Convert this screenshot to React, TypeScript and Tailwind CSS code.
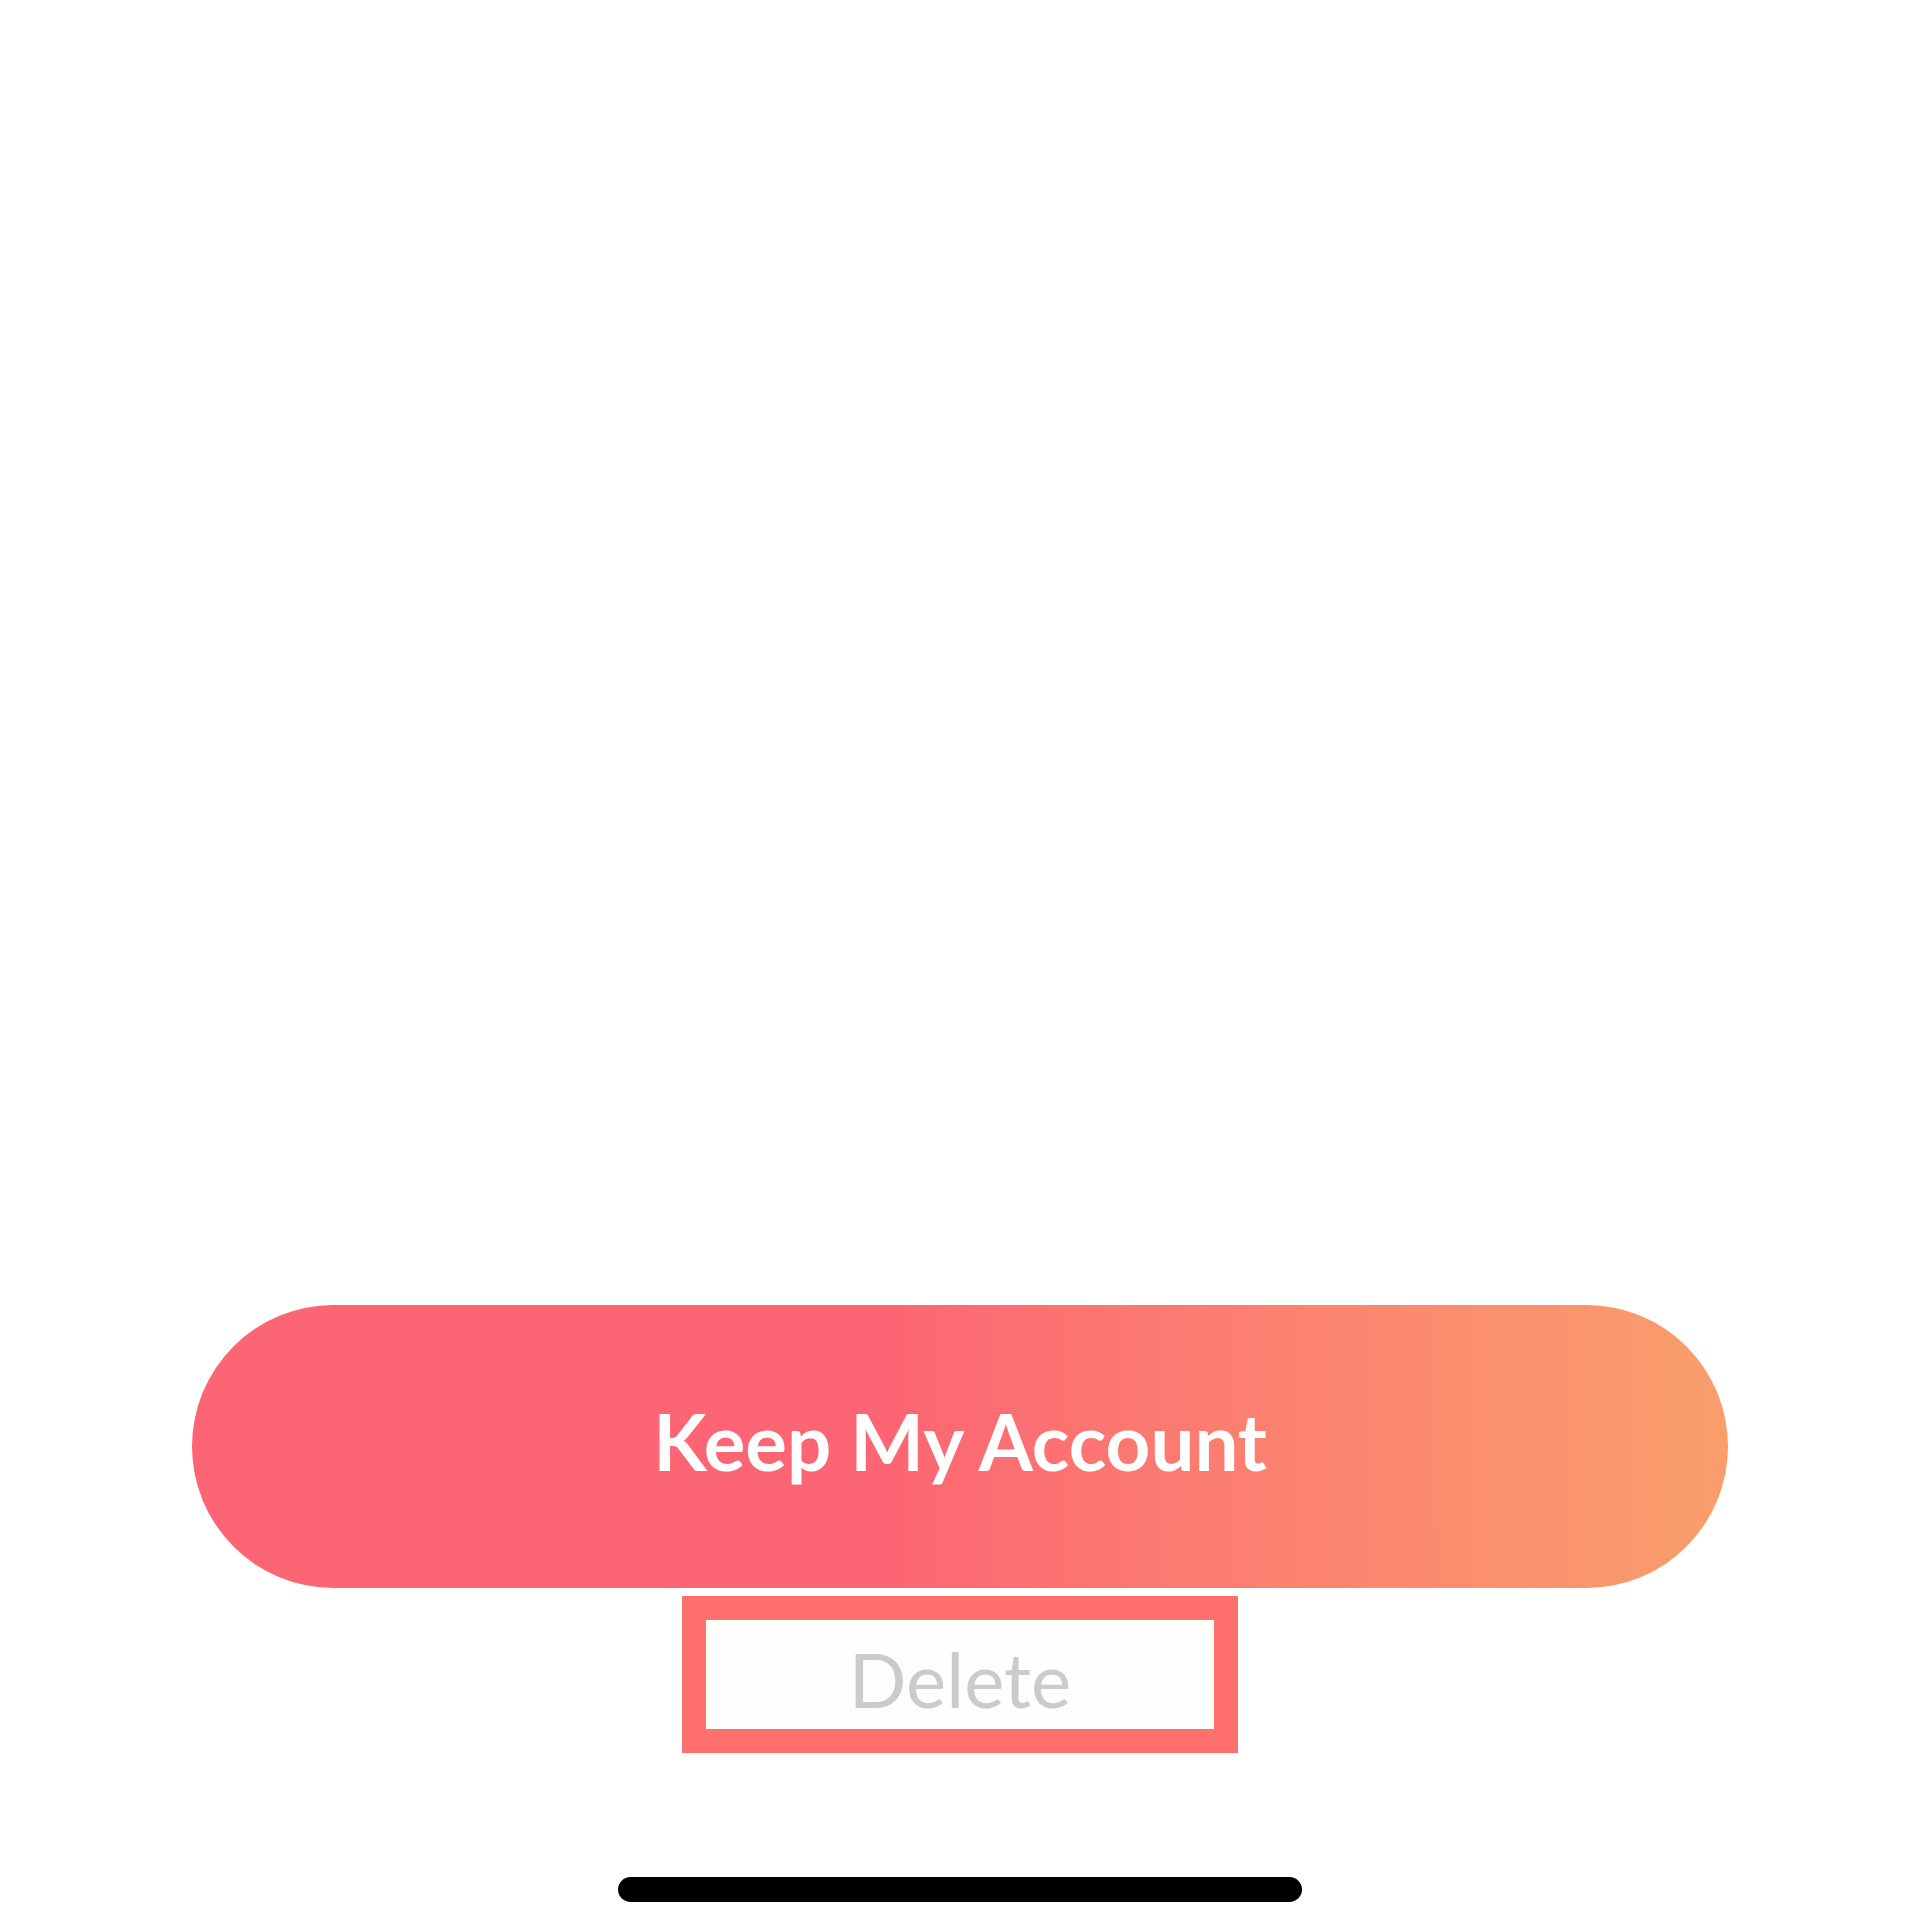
export default function App() {
  return (
    <div className="w-full h-[1920px] bg-white flex flex-col items-center font-['Lato','Noto_Sans',sans-serif]">
      {/* Empty content area */}
      <div className="flex-1" />

      {/* Primary action */}
      <button className="w-[1536px] h-[283px] shrink-0 rounded-full bg-linear-to-r from-[#fc6573] from-45% to-[#f99e6b] text-white text-[78px] font-bold leading-none flex items-center justify-center pb-[12px]">
        Keep My Account
      </button>

      {/* Secondary action, highlighted */}
      <button className="mt-[8px] w-[556px] h-[157px] shrink-0 border-[24px] border-[#ff6f6b] bg-[#fcfffc] text-[#cbcbcb] text-[76px] font-normal leading-none flex items-center justify-center pt-[8px]">
        Delete
      </button>

      {/* Home indicator */}
      <div className="mt-[124px] mb-[18px] w-[684px] h-[25px] shrink-0 rounded-full bg-black" />
    </div>
  );
}
